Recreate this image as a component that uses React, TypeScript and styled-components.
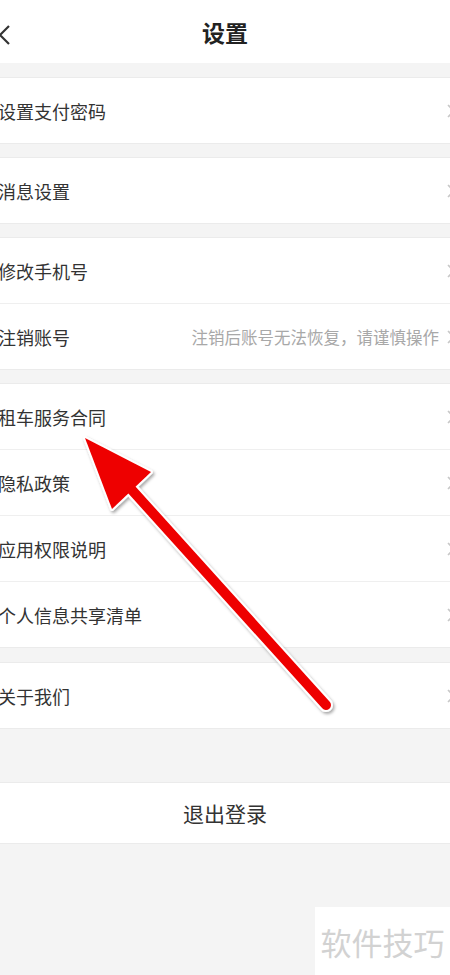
import styled, { createGlobalStyle } from 'styled-components';

const GlobalStyle = createGlobalStyle`
    html, body {
        margin: 0;
        padding: 0;
        background: #f4f4f4;
        overflow-x: hidden;
    }
    body {
        font-family: "Noto Sans CJK SC", "Noto Sans", sans-serif;
    }
`;

const Page = styled.div`
    position: relative;
    width: 450px;
    height: 975px;
    overflow: hidden;
    background: #f4f4f4;
    display: flex;
    flex-direction: column;
`;

const Header = styled.header`
    height: 63px;
    flex-shrink: 0;
    background: #fff;
    display: flex;
    align-items: center;
    justify-content: center;
    position: relative;
`;

const Back = styled.div`
    position: absolute;
    left: -3px;
    top: 24px;
    width: 14px;
    height: 22px;
    display: flex;
`;

const Title = styled.h1`
    margin: 0;
    font-size: 23px;
    font-weight: 700;
    color: #222;
`;

const Gap = styled.div<{ $h: number }>`
    height: ${(p) => p.$h}px;
    flex-shrink: 0;
`;

const Group = styled.section`
    background: #fff;
    border-top: 1px solid #ebebeb;
    border-bottom: 1px solid #ebebeb;
    display: flex;
    flex-direction: column;
`;

const Row = styled.div`
    height: 65px;
    display: flex;
    align-items: center;
    justify-content: space-between;
    & + & {
        border-top: 1px solid #efefef;
    }
`;

const Label = styled.span`
    margin-left: -2px;
    font-size: 18px;
    color: #333;
`;

const Right = styled.div`
    display: flex;
    align-items: center;
    gap: 7px;
    margin-right: -6px;
`;

const Hint = styled.span`
    font-size: 16.5px;
    color: #a8a8a8;
`;

const Logout = styled.div`
    height: 60px;
    display: flex;
    align-items: center;
    justify-content: center;
    font-size: 21px;
    color: #333;
`;

const ArrowLayer = styled.svg`
    position: absolute;
    left: 0;
    top: 0;
    pointer-events: none;
`;

const Watermark = styled.div`
    position: absolute;
    right: 0;
    bottom: 0;
    width: 135px;
    height: 68px;
    background: #fff;
    display: flex;
    align-items: center;
    justify-content: center;
    font-size: 31px;
    color: #d2d2d2;
    box-sizing: border-box;
`;

const Chevron = () => (
    <svg width="10" height="16" viewBox="0 0 10 16">
        <path d="M2 2 L8 8 L2 14" fill="none" stroke="#c8c8c8" strokeWidth="1.6" />
    </svg>
);

function Item({ label, hint }: { label: string; hint?: string }) {
    return (
        <Row>
            <Label>{label}</Label>
            <Right>
                {hint && <Hint>{hint}</Hint>}
                <Chevron />
            </Right>
        </Row>
    );
}

export default function App() {
    return (
        <>
            <GlobalStyle />
            <Page>
                <Header>
                    <Back>
                        <svg width="14" height="22" viewBox="0 0 14 22">
                            <path d="M12 2 L3 11 L12 20" fill="none" stroke="#333" strokeWidth="2.2" />
                        </svg>
                    </Back>
                    <Title>设置</Title>
                </Header>
                <Gap $h={14} />
                <Group>
                    <Item label="设置支付密码" />
                </Group>
                <Gap $h={13} />
                <Group>
                    <Item label="消息设置" />
                </Group>
                <Gap $h={13} />
                <Group>
                    <Item label="修改手机号" />
                    <Item label="注销账号" hint="注销后账号无法恢复，请谨慎操作" />
                </Group>
                <Gap $h={13} />
                <Group>
                    <Item label="租车服务合同" />
                    <Item label="隐私政策" />
                    <Item label="应用权限说明" />
                    <Item label="个人信息共享清单" />
                </Group>
                <Gap $h={14} />
                <Group>
                    <Item label="关于我们" />
                </Group>
                <Gap $h={53} />
                <Group>
                    <Logout>退出登录</Logout>
                </Group>

                <ArrowLayer width="450" height="975" viewBox="0 0 450 975">
                    <defs>
                        <filter id="sh" x="-20%" y="-20%" width="140%" height="140%">
                            <feDropShadow dx="1.5" dy="2" stdDeviation="1.5" floodColor="#000" floodOpacity="0.35" />
                        </filter>
                    </defs>
                    <g filter="url(#sh)">
                        <line x1="122" y1="479" x2="326" y2="705" stroke="#fff" strokeWidth="14" strokeLinecap="round" />
                        <polygon points="85,438 151,472 112,509" fill="#fff" stroke="#fff" strokeWidth="4" strokeLinejoin="round" />
                        <line x1="122" y1="479" x2="326" y2="705" stroke="#ee0000" strokeWidth="10" strokeLinecap="round" />
                        <polygon points="85,438 151,472 112,509" fill="#ee0000" />
                    </g>
                </ArrowLayer>
                <Watermark>软件技巧</Watermark>
            </Page>
        </>
    );
}
